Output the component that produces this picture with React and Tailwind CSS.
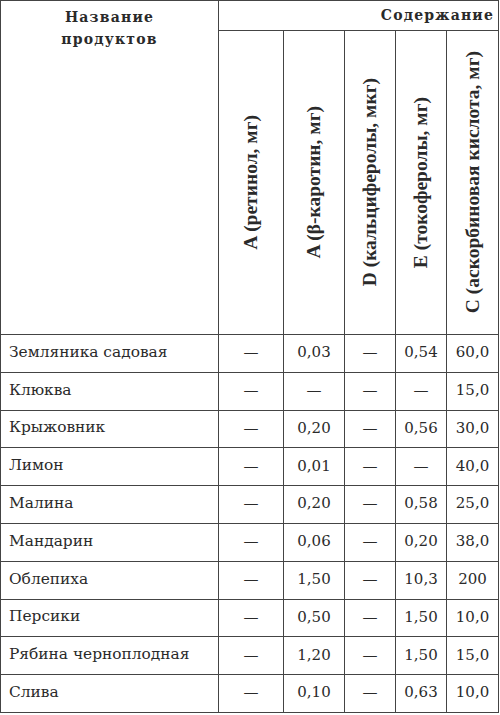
const rows = [
  ['Земляника садовая', '—', '0,03', '—', '0,54', '60,0'],
  ['Клюква', '—', '—', '—', '—', '15,0'],
  ['Крыжовник', '—', '0,20', '—', '0,56', '30,0'],
  ['Лимон', '—', '0,01', '—', '—', '40,0'],
  ['Малина', '—', '0,20', '—', '0,58', '25,0'],
  ['Мандарин', '—', '0,06', '—', '0,20', '38,0'],
  ['Облепиха', '—', '1,50', '—', '10,3', '200'],
  ['Персики', '—', '0,50', '—', '1,50', '10,0'],
  ['Рябина черноплодная', '—', '1,20', '—', '1,50', '15,0'],
  ['Слива', '—', '0,10', '—', '0,63', '10,0'],
]

const heads = [
  'A (ретинол, мг)',
  'A (β-каротин, мг)',
  'D (кальциферолы, мкг)',
  'E (токоферолы, мг)',
  'C (аскорбиновая кислота, мг)',
]

export default function App() {
  return (
    <div className="w-[500px] h-[715px] bg-white text-[#2a2a2a] font-['DejaVu_Serif',serif]">
      <table className="table-fixed border-collapse w-[498px] border border-[#444]">
        <colgroup>
          <col className="w-[218px]" />
          <col className="w-[65px]" />
          <col className="w-[61px]" />
          <col className="w-[51px]" />
          <col className="w-[51px]" />
          <col className="w-[52px]" />
        </colgroup>
        <thead>
          <tr className="h-[30px]">
            <th
              rowSpan={2}
              className="border border-[#444] align-top pt-[5px] text-[14px] font-bold tracking-[1.2px] leading-[22px]"
            >
              Название
              <br />
              продуктов
            </th>
            <th colSpan={5} className="border border-[#444] text-right pr-[4px] text-[14px] font-bold tracking-[1.2px]">
              Содержание
            </th>
          </tr>
          <tr className="h-[304px]">
            {heads.map((h) => (
              <th key={h} className="border border-[#444] p-0">
                <div className="h-[303px] flex items-center justify-center">
                  <span className="[writing-mode:vertical-rl] rotate-180 whitespace-nowrap font-['Liberation_Serif',serif] font-bold text-[19.5px] leading-none">
                    {h}
                  </span>
                </div>
              </th>
            ))}
          </tr>
        </thead>
        <tbody>
          {rows.map((r) => (
            <tr key={r[0]} className="h-[37.8px]">
              {r.map((c, i) => (
                <td
                  key={i}
                  className={
                    i === 0
                      ? 'border border-[#444] pl-[8px] text-[15.4px] pb-[2px]'
                      : 'border border-[#444] text-center text-[15px] pb-[2px]'
                  }
                >
                  {c}
                </td>
              ))}
            </tr>
          ))}
        </tbody>
      </table>
    </div>
  )
}
